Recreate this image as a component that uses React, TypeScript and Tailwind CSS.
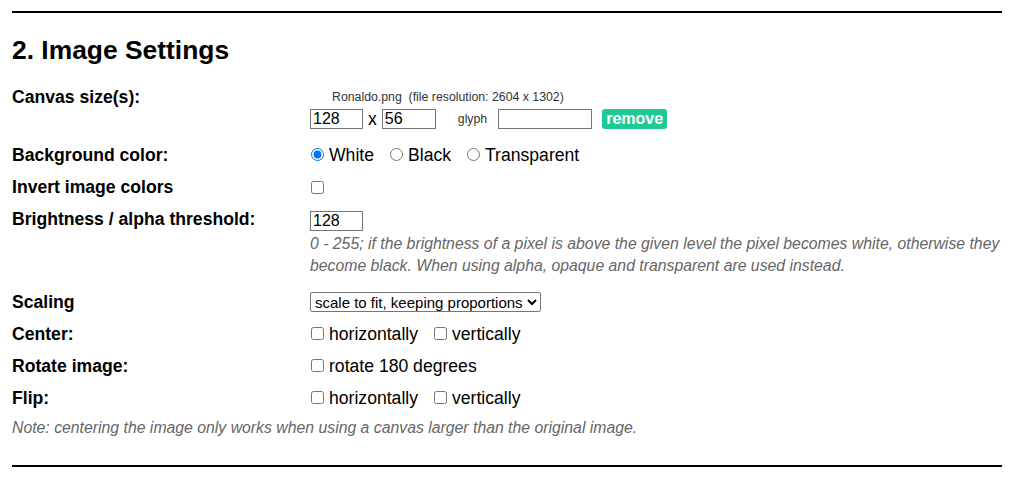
import { useState } from "react"

const label = "font-bold text-[17.6px] leading-[20px]";

function Check({ text, checked = false }: { text?: string; checked?: boolean }) {
    const [on, setOn] = useState(checked);
    return (
        <label className="flex items-center mr-[15px]">
            <input type="checkbox" checked={on} onChange={() => setOn(!on)} className="w-[13px] h-[13px] ml-[1px] mr-[5px] accent-[#0075ff]" />
            {text && <span className="text-[17.6px]">{text}</span>}
        </label>
    );
}

export default function App() {
    const [bg, setBg] = useState("white");

    return (
        <div className="px-3 pt-[11px] text-black font-['Liberation_Sans',Arial,sans-serif] bg-white">
            <div className="h-[2px] bg-black"></div>
            <h2 className="text-[26.4px] leading-[30px] font-bold mt-[22px] mb-[22px]">2. Image Settings</h2>

            <div className="flex">
                <div className={`w-[298px] ${label}`}>Canvas size(s):</div>
                <div className="pt-[3px]">
                    <div className="text-[12.3px] leading-[14px] text-[#333] pl-[22px]">
                        Ronaldo.png&nbsp;&nbsp;(file resolution: 2604 x 1302)
                    </div>
                    <div className="flex items-center mt-[5px] h-[20px]">
                        <input defaultValue="128" className="w-[53px] h-[20px] border border-[#767676] px-[2px] text-[16px] leading-none" />
                        <span className="mx-[5px] text-[17.6px]">x</span>
                        <input defaultValue="56" className="w-[54px] h-[20px] border border-[#767676] px-[2px] text-[16px] leading-none" />
                        <span className="ml-[22px] mr-[11px] text-[12.3px] text-[#333]">glyph</span>
                        <input className="w-[94px] h-[20px] border border-[#767676]" />
                        <button className="ml-[10px] h-[20px] px-[4px] rounded-[3px] bg-[#1ec996] text-white font-bold text-[16px] leading-none">remove</button>
                    </div>
                </div>
            </div>

            <div className="flex items-center h-[32px] mt-[10px]">
                <div className={`w-[298px] ${label}`}>Background color:</div>
                <div className="flex items-center text-[17.6px]">
                    {["White", "Black", "Transparent"].map((c) => (
                        <label key={c} className="flex items-center mr-[15px]">
                            <input type="radio" name="bg" checked={bg === c.toLowerCase()} onChange={() => setBg(c.toLowerCase())} className="w-[13px] h-[13px] ml-[1px] mr-[5px] accent-[#0075ff]" />
                            {c}
                        </label>
                    ))}
                </div>
            </div>

            <div className="flex items-center h-[32px]">
                <div className={`w-[298px] ${label}`}>Invert image colors</div>
                <Check />
            </div>

            <div className="flex pt-[6px]">
                <div className={`w-[298px] ${label}`}>Brightness / alpha threshold:</div>
                <div className="flex-1">
                    <input defaultValue="128" className="w-[53px] h-[20px] border border-[#767676] px-[2px] text-[16px] leading-none" />
                    <p className="italic text-[15.8px] leading-[22px] text-[#666]">
                        0 - 255; if the brightness of a pixel is above the given level the pixel becomes white, otherwise they become black. When using alpha, opaque and transparent are used instead.
                    </p>
                </div>
            </div>

            <div className="flex items-center h-[32px] mt-[9px]">
                <div className={`w-[298px] ${label}`}>Scaling</div>
                <select className="h-[20px] w-[231px] border border-[#767676] rounded-[2px] text-[15px] leading-none">
                    <option>scale to fit, keeping proportions</option>
                    <option>original size</option>
                    <option>stretch to fill canvas</option>
                </select>
            </div>

            <div className="flex items-center h-[32px]">
                <div className={`w-[298px] ${label}`}>Center:</div>
                <Check text="horizontally" />
                <Check text="vertically" />
            </div>

            <div className="flex items-center h-[32px]">
                <div className={`w-[298px] ${label}`}>Rotate image:</div>
                <Check text="rotate 180 degrees" />
            </div>

            <div className="flex items-center h-[32px]">
                <div className={`w-[298px] ${label}`}>Flip:</div>
                <Check text="horizontally" />
                <Check text="vertically" />
            </div>

            <p className="italic text-[15.8px] leading-[22px] text-[#666] mt-[3px]">
                Note: centering the image only works when using a canvas larger than the original image.
            </p>

            <div className="h-[2px] bg-black mt-[26px] mb-[14px]"></div>
        </div>
    )
}
